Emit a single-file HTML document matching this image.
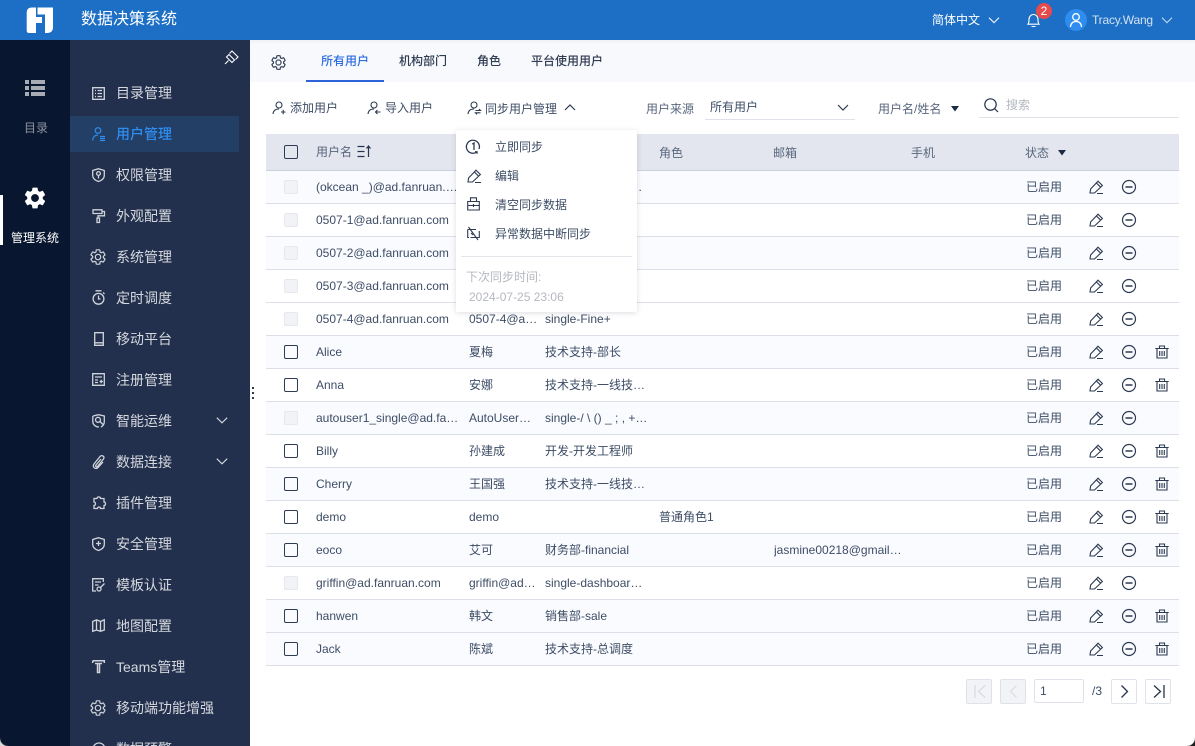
<!DOCTYPE html>
<html lang="zh"><head><meta charset="utf-8"><title>数据决策系统</title>
<style>
*{box-sizing:border-box}
html,body{margin:0;padding:0;width:1195px;height:746px;overflow:hidden;background:#fff}
body{font-family:"Liberation Sans","Noto Sans CJK SC",sans-serif;font-size:12px;color:#3d4d66;position:relative}
.a{position:absolute;white-space:nowrap}
svg{position:absolute;overflow:visible;fill:none}
#top{left:0;top:0;width:1195px;height:40px;background:#1c6fc4}
#rail{left:0;top:40px;width:70px;height:706px;background:#09162f}
#side{left:70px;top:40px;width:180px;height:706px;background:#22304d;overflow:hidden}
.m{position:absolute;left:46px;height:20px;line-height:20px;font-size:14px;color:#d5d8de;white-space:nowrap}
.si{stroke:#d0d4da;stroke-width:1.3}
.tab{position:absolute;top:53px;height:16px;line-height:16px;font-size:12px;font-weight:500;color:#2f3c52;white-space:nowrap}
.tool{position:absolute;top:100px;line-height:16px;font-size:12px;color:#3d4d66;white-space:nowrap}
.ti{stroke:#2c3a52;stroke-width:1.1}
.r{position:absolute;left:266px;width:913px;height:33px;border-bottom:1px solid #dcdfe8;line-height:32px;background:#fff}
.r.l{background:#fafbfe}
.r span{position:absolute;top:0;height:32px;overflow:hidden;white-space:nowrap;text-overflow:ellipsis;color:#3d4d66}
.n{left:50px;width:144px}.d{left:203px;width:68.5px}.p{left:279px;width:104px}.o{left:393px}.e{left:508px;width:128px}.s{left:760px}
.c{position:absolute;left:18px;top:9px;width:14px;height:14px;border-radius:2px;border:1px solid #2e3c54}
.c.x{border:1px solid #e6e8ee;background:#f2f3f6}
.ic{stroke:#2c3a52;stroke-width:1.1}
.pg{position:absolute;top:679px;width:26px;height:25px;border:1px solid #dfe2e9;border-radius:2px;background:#fff}
.pg.x{background:#f2f3f6}
.pi{position:absolute;left:495px;line-height:16px;font-size:12px;color:#3d4d66;white-space:nowrap}
</style></head><body>
<svg width="0" height="0" style="position:absolute"><defs>
<g id="ed"><path d="M1 13 1.600 9 9 1.200 13.400 5.500 5.500 13ZM7.400 3 11.700 7.200M8 13.500H14"/></g>
<g id="mi"><circle cx="7" cy="7" r="6.500" stroke-width="1.200"/><path d="M3.500 7H10.500" stroke-width="1.500"/></g>
<g id="tr"><path d="M.3 3.500H13.700M4.500 3.500V1H9.500V3.500M2 3.500V13H12V3.500M4.700 6V11M7 6V11M9.300 6V11"/></g>
<path id="gear" d="M19.140 12.940c.04-.3.06-.61.06-.94 0-.32-.02-.64-.07-.94l2.030-1.580c.18-.14.23-.41.12-.61l-1.920-3.320c-.12-.22-.37-.29-.59-.22l-2.390.96c-.5-.38-1.030-.7-1.620-.94l-.36-2.540c-.04-.24-.24-.41-.48-.41h-3.840c-.24 0-.43.17-.47.41l-.36 2.540c-.59.24-1.130.57-1.620.94l-2.390-.96c-.22-.08-.47 0-.59.22L2.740 8.870c-.12.21-.08.47.12.61l2.030 1.580c-.05.3-.09.63-.09.94s.02.64.07.94l-2.030 1.580c-.18.14-.23.41-.12.61l1.920 3.320c.12.22.37.29.59.22l2.390-.96c.5.38 1.030.7 1.620.94l.36 2.540c.05.24.24.41.48.41h3.840c.24 0 .44-.17.47-.41l.36-2.540c.59-.24 1.130-.56 1.620-.94l2.390.96c.22.08.47 0 .59-.22l1.920-3.320c.12-.22.07-.47-.12-.61l-2.010-1.580zM12 15.600c-1.980 0-3.600-1.620-3.600-3.600s1.620-3.600 3.600-3.600 3.600 1.620 3.600 3.600-1.620 3.600-3.600 3.600z"/>
<g id="usr"><circle cx="7" cy="4" r="3"/><path d="M1 13C1.300 9.800 3.500 8 7 8"/></g>
</defs></svg>

<div class="a" id="top"></div>
<svg style="left:26px;top:7px" width="28" height="27" viewBox="0 0 28 27"><path fill="#fff" d="M6 .5H10V26H3Q.7 26 .7 23.500V6Q.7 .5 6 .5ZM10 10H16V16H10ZM11.500 .5H27V20Q27 26 21 26H19V7.500H11.500Z"/></svg>
<div class="a" style="left:81px;top:10px;font-size:16px;line-height:20px;color:#fff">数据决策系统</div>

<div class="a" style="left:932px;top:12px;line-height:16px;color:#fff">简体中文</div>
<svg style="left:988px;top:17px" width="12" height="7"><path d="M1 .7 6 5.700 11 .7" stroke="#e5edf7" stroke-width="1.200"/></svg>
<svg style="left:1026px;top:13px" width="15" height="15" viewBox="0 0 15 15"><path d="M2 11.200C3 10 3 8 3 6.500 3 3.500 5 1.500 7.500 1.500S12 3.500 12 6.500C12 8 12 10 13 11.200ZM5.500 13.500H9.500" stroke="#fff" stroke-width="1.100"/></svg>
<div class="a" style="left:1036px;top:3px;width:16px;height:16px;border-radius:8px;background:#e64a4a;color:#fff;font-size:12px;line-height:16px;text-align:center">2</div>
<div class="a" style="left:1065px;top:9px;width:22px;height:22px;border-radius:11px;background:#2f8df0"></div>
<svg style="left:1065px;top:9px" width="22" height="22"><circle cx="11" cy="8" r="3.300" stroke="#fff" stroke-width="1.300"/><path d="M5.500 18C5.800 14 8 12.500 11 12.500S16.200 14 16.500 18" stroke="#fff" stroke-width="1.300"/></svg>
<div class="a" style="left:1092px;top:12px;line-height:16px;color:#d3e2f3;letter-spacing:-.2px">Tracy.Wang</div>
<svg style="left:1161px;top:17px" width="12" height="7"><path d="M1 .7 6 5.700 11 .7" stroke="#b9d2ec" stroke-width="1.100"/></svg>

<div class="a" id="rail"></div>
<svg style="left:25px;top:80px" width="20" height="16"><path fill="#a7abb3" d="M0 0H4V4H0ZM6 0H20V4H6ZM0 6H4V10H0ZM6 6H20V10H6ZM0 12H4V16H0ZM6 12H20V16H6Z"/></svg>
<div class="a" style="left:24px;top:120px;line-height:16px;color:#8e94a0">目录</div>
<div class="a" style="left:0;top:195px;width:3px;height:50px;background:#fff"></div>
<svg style="left:22px;top:185px" width="26" height="26" viewBox="0 0 24 24"><use href="#gear" fill="#fff"/></svg>
<div class="a" style="left:11px;top:230px;line-height:16px;color:#fff">管理系统</div>

<div class="a" id="side">
 <div style="position:absolute;left:0;top:76px;width:169px;height:36px;background:#243f66"></div>
 <svg style="left:154px;top:10px" width="15" height="15" viewBox="0 0 15 15"><path d="M5 4.500 10.500 10 8 12.500 2.500 7ZM5.500 3.500 8 1 14 7 11.500 9.500M1 14 4.500 10.500" stroke="#fff" stroke-width="1.100"/></svg>
 <div class="m" style="top:43px">目录管理</div>
 <div class="m" style="top:84px;color:#2f8df0;font-weight:500">用户管理</div>
 <div class="m" style="top:125px">权限管理</div>
 <div class="m" style="top:166px">外观配置</div>
 <div class="m" style="top:207px">系统管理</div>
 <div class="m" style="top:248px">定时调度</div>
 <div class="m" style="top:289px">移动平台</div>
 <div class="m" style="top:330px">注册管理</div>
 <div class="m" style="top:371px">智能运维</div>
 <div class="m" style="top:412px">数据连接</div>
 <div class="m" style="top:453px">插件管理</div>
 <div class="m" style="top:494px">安全管理</div>
 <div class="m" style="top:535px">模板认证</div>
 <div class="m" style="top:576px">地图配置</div>
 <div class="m" style="top:617px">Teams管理</div>
 <div class="m" style="top:658px">移动端功能增强</div>
 <div class="m" style="top:699px">数据预警</div>
 <svg class="si" style="left:22px;top:47px" width="13" height="13"><path d="M.7.7H12.300V12.300H.7ZM3 3.500H4M5.500 3.500H10M3 6.500H4M5.500 6.500H10M3 9.500H4M5.500 9.500H10"/></svg>
 <svg style="left:22px;top:87px" width="13" height="14" stroke="#2f8df0" stroke-width="1.200"><circle cx="6" cy="3.500" r="2.800"/><path d="M.7 13.500C.9 10 3 8 6 8M8 9.500H13M8 11.500H13M8 13.500H13"/></svg>
 <svg class="si" style="left:22px;top:128px" width="13" height="14"><path d="M6.500 .7 12.300 2.500V7.500C12.300 10.500 9.500 12.500 6.500 13.500 3.500 12.500.7 10.500.7 7.500V2.500Z"/><circle cx="6.500" cy="5.500" r="1.900"/><path d="M6.500 7.500V10.500"/></svg>
 <svg class="si" style="left:22px;top:169px" width="13" height="14"><path d="M1 .8H10V4.500H1ZM10 2.500H12.500V6.800H6V9M5 9H7.500V13.500H5Z"/></svg>
 <svg style="left:19px;top:208px" width="18" height="18" viewBox="0 0 24 24"><use href="#gear" stroke="#d0d4da" stroke-width="1.600"/></svg>
 <svg class="si" style="left:22px;top:250px" width="13" height="15"><circle cx="6.500" cy="8.800" r="5.400"/><path d="M3.500 .8H9.500M6.500 5.500V9H8.500M11 2.500 12.500 4"/></svg>
 <svg class="si" style="left:24px;top:292px" width="10" height="14"><path d="M.7.7H9.300V13.300H.7ZM.7 10.800H9.300"/></svg>
 <svg class="si" style="left:22px;top:333px" width="13" height="13"><path d="M.7.7H12.300V12.300H.7ZM3 4H10M3 7H6M3 9.500H6M7.500 8.500H11M9.200 6.700V10.300"/></svg>
 <svg class="si" style="left:22px;top:374px" width="13" height="14"><path d="M1 2 6.500 .7 12.300 2V7.500C12.300 10 11 12 9 13M.8 2V7.500C.8 10.500 3.500 13 7 13"/><circle cx="6" cy="5.800" r="2.500"/><path d="M8 7.500 11 10.500"/></svg>
 <svg class="si" style="left:22px;top:415px" width="13" height="14"><path d="M9 4 4 10C3 11.500 4.500 12.500 5.500 11.500L11.500 4C13 1.500 10 -.5 8 1.500L2 9C0 12 3.500 15 6 12.500L11 7"/></svg>
 <svg style="left:146px;top:377px" width="12" height="7"><path d="M.8.7 6 5.800 11.200.7" stroke="#d5d8de" stroke-width="1.100"/></svg>
 <svg style="left:146px;top:418px" width="12" height="7"><path d="M.8.7 6 5.800 11.200.7" stroke="#d5d8de" stroke-width="1.100"/></svg>
 <svg class="si" style="left:22px;top:456px" width="14" height="14"><path d="M5 2.500C5 .3 8.500 .3 8.500 2.500H12V6C14 6 14 9.500 12 9.500V12.500H8.500C8.500 10.500 5.500 10.500 5.500 12.500H2V9.500C4 9.500 4 6 2 6V2.500Z"/></svg>
 <svg class="si" style="left:22px;top:497px" width="13" height="14"><path d="M6.500 .7 12.300 2.500V7.500C12.300 10.500 9.500 12.500 6.500 13.500 3.500 12.500.7 10.500.7 7.500V2.500ZM4 6.500H9M6.500 4V9"/></svg>
 <svg class="si" style="left:22px;top:538px" width="13" height="14"><path d="M4 13H.7V.7H11.300V4M3 4H9M3 7H6.500"/><circle cx="7" cy="11" r="2"/><path d="M8.500 9.500 12.500 5.500"/></svg>
 <svg class="si" style="left:22px;top:579px" width="13" height="13"><path d="M.7 2.500 4.500 .8 8.500 2.500 12.300.8V11L8.500 12.300 4.500 11 .7 12.300ZM4.500 .8V11M8.500 2.500V12.300"/></svg>
 <svg class="si" style="left:22px;top:620px;stroke-width:1.500" width="13" height="13"><path d="M.7.8H12.300V3M.7.8V3M3 3.500H10M5.500 3.500V12.500H7.500V3.500"/></svg>
 <svg style="left:19px;top:659px" width="18" height="18" viewBox="0 0 24 24"><use href="#gear" stroke="#d0d4da" stroke-width="1.600"/></svg>
 <svg class="si" style="left:22px;top:702px" width="14" height="14"><circle cx="7" cy="7" r="6"/></svg>
</div>

<div class="a" style="left:250px;top:40px;width:945px;height:42px;background:#f8f9fc"></div>
<div class="a" style="left:250px;top:40px;width:945px;height:4px;background:linear-gradient(#eff0f3,#f8f9fc)"></div>
<svg style="left:269.500px;top:53.500px" width="17" height="17" viewBox="0 0 24 24"><use href="#gear" stroke="#2c3a52" stroke-width="1.600"/></svg>
<div class="tab" style="left:321px;color:#2f6fe0">所有用户</div>
<div class="tab" style="left:399px">机构部门</div>
<div class="tab" style="left:477px">角色</div>
<div class="tab" style="left:531px">平台使用用户</div>
<div class="a" style="left:306px;top:80px;width:78px;height:2px;background:#2d62d8"></div>

<svg class="ti" style="left:272px;top:101px" width="14" height="14"><use href="#usr"/><path d="M9 11H13.500M11.200 8.800V13.300"/></svg>
<div class="tool" style="left:290px">添加用户</div>
<svg class="ti" style="left:367px;top:101px" width="14" height="14"><use href="#usr"/><path d="M13.500 11H8.500M10.500 9 8.500 11 10.500 13"/></svg>
<div class="tool" style="left:385px">导入用户</div>
<svg class="ti" style="left:467px;top:101px" width="14" height="14"><use href="#usr"/><path d="M8.500 9.500H13.500L12 8M13.500 11.800H8.500L10 13.300"/></svg>
<div class="tool" style="left:485px;top:101px">同步用户管理</div>
<svg style="left:564px;top:104px" width="12" height="7"><path d="M1 6 6 1 11 6" stroke="#2c3a52" stroke-width="1.200"/></svg>

<div class="tool" style="left:646px;top:101px;color:#59667d">用户来源</div>
<div class="tool" style="left:710px;top:99px">所有用户</div>
<svg style="left:837px;top:104px" width="12" height="8"><path d="M1 1 6 6 11 1" stroke="#2c3a52" stroke-width="1.200"/></svg>
<div class="a" style="left:705px;top:119px;width:150px;height:1px;background:#dfe2e9"></div>
<div class="tool" style="left:878px;top:101px;color:#59667d">用户名/姓名</div>
<svg style="left:951px;top:106px" width="8" height="6"><path d="M0 0H8L4 5.500Z" fill="#1d2a44"/></svg>
<svg style="left:983.500px;top:98px" width="15" height="15"><circle cx="6.500" cy="6.500" r="5.700" stroke="#26344d" stroke-width="1.200"/><path d="M10.500 10.500 14 14" stroke="#26344d" stroke-width="1.200"/></svg>
<div class="tool" style="left:1006px;top:97px;color:#b4b8c0">搜索</div>
<div class="a" style="left:979px;top:117px;width:200px;height:1px;background:#dfe2e9"></div>

<div class="a" style="left:266px;top:134px;width:913px;height:37px;background:#e3e6ee;border-bottom:1px solid #ccd0da"></div>
<div class="a" style="left:284px;top:145px;width:14px;height:14px;border:1px solid #2e3c54;border-radius:2px"></div>
<div class="a" style="left:316px;top:144px;line-height:16px;color:#59667d">用户名</div>
<svg style="left:357px;top:145px" width="15" height="13"><path d="M.5 1.500H7.500M.5 6.500H7.500M.5 11.500H7.500M11.500 12V1.500M9.500 3.500 11.500 1 13.500 3.500" stroke="#26344d" stroke-width="1.200"/></svg>
<div class="a" style="left:659px;top:145px;line-height:16px;color:#59667d">角色</div>
<div class="a" style="left:773px;top:145px;line-height:16px;color:#59667d">邮箱</div>
<div class="a" style="left:911px;top:145px;line-height:16px;color:#59667d">手机</div>
<div class="a" style="left:1025px;top:145px;line-height:16px;color:#59667d">状态</div>
<svg style="left:1058px;top:150px" width="8" height="6"><path d="M0 0H8L4 5.500Z" fill="#1d2a44"/></svg>

<div class="r l" style="top:171px"><i class="c x"></i><span class="n">(okcean _)@ad.fanruan.com.cn.local</span><span class="d">okcean</span><span class="p">single-dashboard-Fine</span><span class="s">已启用</span></div>
<div class="r" style="top:204px"><i class="c x"></i><span class="n">0507-1@ad.fanruan.com</span><span class="d">0507-1@ad.fanruan.com</span><span class="p">single-Fine+</span><span class="s">已启用</span></div>
<div class="r l" style="top:237px"><i class="c x"></i><span class="n">0507-2@ad.fanruan.com</span><span class="d">0507-2@ad.fanruan.com</span><span class="p">single-Fine+</span><span class="s">已启用</span></div>
<div class="r" style="top:270px"><i class="c x"></i><span class="n">0507-3@ad.fanruan.com</span><span class="d">0507-3@ad.fanruan.com</span><span class="p">single-Fine+</span><span class="s">已启用</span></div>
<div class="r" style="top:303px"><i class="c x"></i><span class="n">0507-4@ad.fanruan.com</span><span class="d">0507-4@ad.fanruan.com</span><span class="p">single-Fine+</span><span class="s">已启用</span></div>
<div class="r l" style="top:336px"><i class="c"></i><span class="n">Alice</span><span class="d">夏梅</span><span class="p">技术支持-部长</span><span class="s">已启用</span></div>
<div class="r" style="top:369px"><i class="c"></i><span class="n">Anna</span><span class="d">安娜</span><span class="p">技术支持-一线技术支持</span><span class="s">已启用</span></div>
<div class="r l" style="top:402px"><i class="c x"></i><span class="n">autouser1_single@ad.fanruan.com</span><span class="d">AutoUser自动用户</span><span class="p">single-/ \ () _ ; , + - = abc</span><span class="s">已启用</span></div>
<div class="r" style="top:435px"><i class="c"></i><span class="n">Billy</span><span class="d">孙建成</span><span class="p">开发-开发工程师</span><span class="s">已启用</span></div>
<div class="r l" style="top:468px"><i class="c"></i><span class="n">Cherry</span><span class="d">王国强</span><span class="p">技术支持-一线技术支持</span><span class="s">已启用</span></div>
<div class="r" style="top:501px"><i class="c"></i><span class="n">demo</span><span class="d">demo</span><span class="o">普通角色1</span><span class="s">已启用</span></div>
<div class="r l" style="top:534px"><i class="c"></i><span class="n">eoco</span><span class="d">艾可</span><span class="p">财务部-financial</span><span class="e">jasmine00218@gmail.com</span><span class="s">已启用</span></div>
<div class="r" style="top:567px"><i class="c x"></i><span class="n">griffin@ad.fanruan.com</span><span class="d">griffin@ad.fanruan</span><span class="p">single-dashboard-Fine</span><span class="s">已启用</span></div>
<div class="r l" style="top:600px"><i class="c"></i><span class="n">hanwen</span><span class="d">韩文</span><span class="p">销售部-sale</span><span class="s">已启用</span></div>
<div class="r l" style="top:633px"><i class="c"></i><span class="n">Jack</span><span class="d">陈斌</span><span class="p">技术支持-总调度</span><span class="s">已启用</span></div>

<svg class="ic" style="left:1089px;top:180px" width="14" height="14"><use href="#ed"/></svg><svg class="ic" style="left:1122px;top:180px" width="14" height="14"><use href="#mi"/></svg>
<svg class="ic" style="left:1089px;top:213px" width="14" height="14"><use href="#ed"/></svg><svg class="ic" style="left:1122px;top:213px" width="14" height="14"><use href="#mi"/></svg>
<svg class="ic" style="left:1089px;top:246px" width="14" height="14"><use href="#ed"/></svg><svg class="ic" style="left:1122px;top:246px" width="14" height="14"><use href="#mi"/></svg>
<svg class="ic" style="left:1089px;top:279px" width="14" height="14"><use href="#ed"/></svg><svg class="ic" style="left:1122px;top:279px" width="14" height="14"><use href="#mi"/></svg>
<svg class="ic" style="left:1089px;top:312px" width="14" height="14"><use href="#ed"/></svg><svg class="ic" style="left:1122px;top:312px" width="14" height="14"><use href="#mi"/></svg>
<svg class="ic" style="left:1089px;top:345px" width="14" height="14"><use href="#ed"/></svg><svg class="ic" style="left:1122px;top:345px" width="14" height="14"><use href="#mi"/></svg><svg class="ic" style="left:1155px;top:345px" width="14" height="14"><use href="#tr"/></svg>
<svg class="ic" style="left:1089px;top:378px" width="14" height="14"><use href="#ed"/></svg><svg class="ic" style="left:1122px;top:378px" width="14" height="14"><use href="#mi"/></svg><svg class="ic" style="left:1155px;top:378px" width="14" height="14"><use href="#tr"/></svg>
<svg class="ic" style="left:1089px;top:411px" width="14" height="14"><use href="#ed"/></svg><svg class="ic" style="left:1122px;top:411px" width="14" height="14"><use href="#mi"/></svg>
<svg class="ic" style="left:1089px;top:444px" width="14" height="14"><use href="#ed"/></svg><svg class="ic" style="left:1122px;top:444px" width="14" height="14"><use href="#mi"/></svg><svg class="ic" style="left:1155px;top:444px" width="14" height="14"><use href="#tr"/></svg>
<svg class="ic" style="left:1089px;top:477px" width="14" height="14"><use href="#ed"/></svg><svg class="ic" style="left:1122px;top:477px" width="14" height="14"><use href="#mi"/></svg><svg class="ic" style="left:1155px;top:477px" width="14" height="14"><use href="#tr"/></svg>
<svg class="ic" style="left:1089px;top:510px" width="14" height="14"><use href="#ed"/></svg><svg class="ic" style="left:1122px;top:510px" width="14" height="14"><use href="#mi"/></svg><svg class="ic" style="left:1155px;top:510px" width="14" height="14"><use href="#tr"/></svg>
<svg class="ic" style="left:1089px;top:543px" width="14" height="14"><use href="#ed"/></svg><svg class="ic" style="left:1122px;top:543px" width="14" height="14"><use href="#mi"/></svg><svg class="ic" style="left:1155px;top:543px" width="14" height="14"><use href="#tr"/></svg>
<svg class="ic" style="left:1089px;top:576px" width="14" height="14"><use href="#ed"/></svg><svg class="ic" style="left:1122px;top:576px" width="14" height="14"><use href="#mi"/></svg>
<svg class="ic" style="left:1089px;top:609px" width="14" height="14"><use href="#ed"/></svg><svg class="ic" style="left:1122px;top:609px" width="14" height="14"><use href="#mi"/></svg><svg class="ic" style="left:1155px;top:609px" width="14" height="14"><use href="#tr"/></svg>
<svg class="ic" style="left:1089px;top:642px" width="14" height="14"><use href="#ed"/></svg><svg class="ic" style="left:1122px;top:642px" width="14" height="14"><use href="#mi"/></svg><svg class="ic" style="left:1155px;top:642px" width="14" height="14"><use href="#tr"/></svg>

<div class="a" style="left:252px;top:387px;width:2px;height:2px;background:#2c3a52;box-shadow:0 5px 0 #2c3a52,0 10px 0 #2c3a52"></div>

<div class="a" style="left:456px;top:130px;width:181px;height:182px;background:#fff;border-radius:2px;box-shadow:0 1px 6px rgba(40,50,70,.16)"></div>
<svg class="ic" style="left:466px;top:139px;stroke-width:1.300" width="15" height="15"><path d="M11 12.800A6.500 6.500 0 1 1 13 10M9 12.800 11 12.800 11 14.800"/><path d="M6.300 5.200 8 4V11"/></svg>
<div class="pi" style="top:139px">立即同步</div>
<svg class="ic" style="left:467px;top:169px" width="14" height="14"><use href="#ed"/></svg>
<div class="pi" style="top:168px">编辑</div>
<svg class="ic" style="left:467px;top:197px" width="13" height="14"><path d="M.7 4.500H12.300V13H.7ZM3.500 4.500V.8H9.500V4.500M.7 8.500H12.300M6.500 7V10"/></svg>
<div class="pi" style="top:197px">清空同步数据</div>
<svg class="ic" style="left:467px;top:226px" width="13" height="15"><path d="M.7 3.500 9 3.500M12.300 5V11.500H3.500M.7 3.500V11.500H2M1.500 1 11 14M4 7 6 9"/></svg>
<div class="pi" style="top:226px">异常数据中断同步</div>
<div class="a" style="left:461px;top:256px;width:171px;height:1px;background:#e3e5ea"></div>
<div class="a" style="left:466px;top:269px;line-height:16px;color:#b5b8c0">下次同步时间:</div>
<div class="a" style="left:469px;top:289px;line-height:16px;color:#b5b8c0">2024-07-25 23:06</div>

<div class="pg x" style="left:966px"></div><svg style="left:974px;top:685px" width="12" height="13"><path d="M1 0V13M11 .5 4.500 6.500 11 12.500" stroke="#d8dbe2" stroke-width="1.200"/></svg>
<div class="pg x" style="left:1000px"></div><svg style="left:1009px;top:685px" width="9" height="13"><path d="M7.500 .5 1.500 6.500 7.500 12.500" stroke="#d8dbe2" stroke-width="1.200"/></svg>
<div class="a" style="left:1034px;top:679px;width:50px;height:24px;border:1px solid #dfe2e9;border-radius:2px;line-height:23px;padding-left:5px;color:#3d4d66">1</div>
<div class="a" style="left:1092px;top:683px;line-height:16px;color:#3d4d66">/3</div>
<div class="pg" style="left:1111px"></div><svg style="left:1120px;top:685px" width="9" height="13"><path d="M1.500 .5 7.500 6.500 1.500 12.500" stroke="#26344d" stroke-width="1.300"/></svg>
<div class="pg" style="left:1145px"></div><svg style="left:1153px;top:685px" width="12" height="13"><path d="M1 .5 7.500 6.500 1 12.500M11 0V13" stroke="#26344d" stroke-width="1.300"/></svg>

<div class="a" style="left:0;top:738px;width:8px;height:8px;background:radial-gradient(circle at 100% 0,transparent 7.500px,#d8d9dc 8.500px)"></div>
<div class="a" style="left:1187px;top:738px;width:8px;height:8px;background:radial-gradient(circle at 0 0,transparent 7.500px,#1a1a1a 8.500px)"></div>
</body></html>
